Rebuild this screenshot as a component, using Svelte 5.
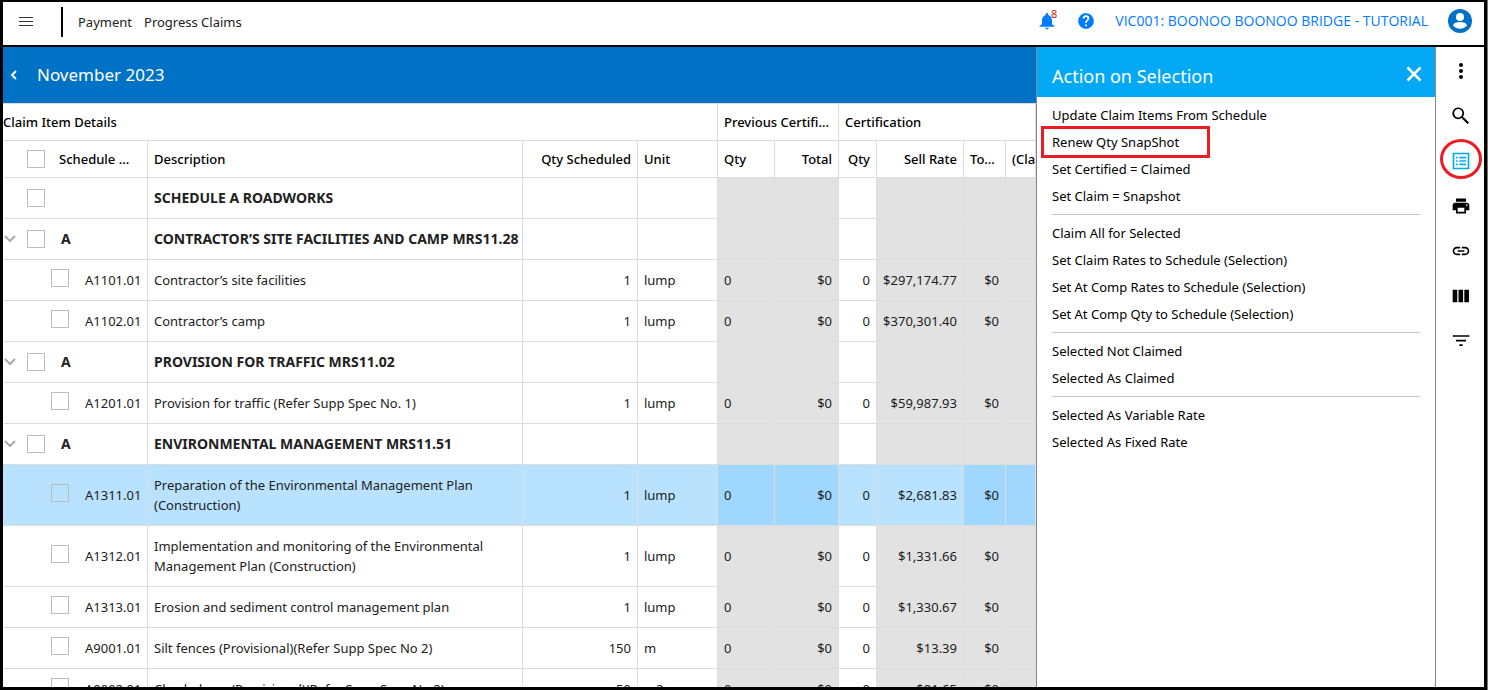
<script>
  let selectAll = $state(false);

  let rows = $state([
    { description: 'SCHEDULE A ROADWORKS', group: true },
    { code: 'A', description: 'CONTRACTOR’S SITE FACILITIES AND CAMP MRS11.28', group: true, open: true },
    { code: 'A1101.01', description: 'Contractor’s site facilities', scheduled: '1', unit: 'lump', rate: '$297,174.77' },
    { code: 'A1102.01', description: 'Contractor’s camp', scheduled: '1', unit: 'lump', rate: '$370,301.40' },
    { code: 'A', description: 'PROVISION FOR TRAFFIC MRS11.02', group: true, open: true },
    { code: 'A1201.01', description: 'Provision for traffic (Refer Supp Spec No. 1)', scheduled: '1', unit: 'lump', rate: '$59,987.93' },
    { code: 'A', description: 'ENVIRONMENTAL MANAGEMENT MRS11.51', group: true, open: true },
    { code: 'A1311.01', description: 'Preparation of the Environmental Management Plan (Construction)', scheduled: '1', unit: 'lump', rate: '$2,681.83', active: true },
    { code: 'A1312.01', description: 'Implementation and monitoring of the Environmental Management Plan (Construction)', scheduled: '1', unit: 'lump', rate: '$1,331.66' },
    { code: 'A1313.01', description: 'Erosion and sediment control management plan', scheduled: '1', unit: 'lump', rate: '$1,330.67' },
    { code: 'A9001.01', description: 'Silt fences (Provisional)(Refer Supp Spec No 2)', scheduled: '150', unit: 'm', rate: '$13.39' },
    { code: 'A9002.01', description: 'Check dams (Provisional)(Refer Supp Spec No 2)', scheduled: '50', unit: 'm2', rate: '$81.65' }
  ]);

  const actions = [
    ['Update Claim Items From Schedule', 'Renew Qty SnapShot', 'Set Certified = Claimed', 'Set Claim = Snapshot'],
    [
      'Claim All for Selected',
      'Set Claim Rates to Schedule (Selection)',
      'Set At Comp Rates to Schedule (Selection)',
      'Set At Comp Qty to Schedule (Selection)'
    ],
    ['Selected Not Claimed', 'Selected As Claimed'],
    ['Selected As Variable Rate', 'Selected As Fixed Rate']
  ];

  const tools = [
    { label: 'More', path: 'M12 7.200a2.400 2.400 0 1 0 0-4.800 2.400 2.400 0 0 0 0 4.800zm0 2.400a2.400 2.400 0 1 0 0 4.800 2.400 2.400 0 0 0 0-4.800zm0 7.200a2.400 2.400 0 1 0 0 4.800 2.400 2.400 0 0 0 0-4.800z' },
    { label: 'Search', path: 'M15.300 13.500h-.9l-.3-.3a7 7 0 1 0-1 1l.3.3v.9l6.400 6.300 1.800-1.800zM8.700 13.700a5 5 0 1 1 0-10 5 5 0 0 1 0 10z' },
    { label: 'Actions', active: true, path: 'M2 2h20v20H2zM4 4v16h16V4zM6 7h2v2H6zM10 7h8v2h-8zM6 11h2v2H6zM10 11h8v2h-8zM6 15h2v2H6zM10 15h8v2h-8z' },
    { label: 'Print', path: 'M19 8H5c-1.660 0-3 1.340-3 3v6h4v4h12v-4h4v-6c0-1.660-1.340-3-3-3zm-3 11H8v-5h8v5zm3-7c-.55 0-1-.45-1-1s.45-1 1-1 1 .45 1 1-.45 1-1 1zm-1-9H6v4h12V3z' },
    { label: 'Link', path: 'M3.900 12c0-1.710 1.390-3.100 3.100-3.100h4V7H7c-2.760 0-5 2.240-5 5s2.240 5 5 5h4v-1.900H7c-1.710 0-3.100-1.390-3.100-3.100zM8 13h8v-2H8v2zm9-6h-4v1.900h4c1.710 0 3.100 1.390 3.100 3.100s-1.390 3.100-3.100 3.100h-4V17h4c2.760 0 5-2.240 5-5s-2.240-5-5-5z' },
    { label: 'Columns', path: 'M2 4.500h5.500v15H2zM9 4.500h5.500v15H9zM16 4.500h5.500v15H16z' },
    { label: 'Filter', path: 'M10 18h4v-2h-4v2zM2 5v2h20V5H2zm4 7.500h12v-2H6v2z' }
  ];

  function toggleAll() {
    for (const row of rows) row.checked = selectAll;
  }
</script>

<div class="app">
  <header class="topbar">
    <button class="menu" aria-label="Menu">
      <svg width="14" height="12" viewBox="0 0 14 12" stroke="#333" stroke-width="1">
        <path d="M0 1.500h14M0 5.500h14M0 9.500h14" />
      </svg>
    </button>
    <nav class="crumbs">
      <a href="#payment">Payment</a>
      <a href="#claims">Progress Claims</a>
    </nav>
    <div class="account">
      <button class="bell" aria-label="Notifications">
        <svg width="20" height="20" viewBox="0 0 24 24" fill="#007bff">
          <path d="M12 22c1.100 0 2-.9 2-2h-4c0 1.100.9 2 2 2zm6-6v-5c0-3.070-1.640-5.640-4.500-6.320V4a1.500 1.500 0 0 0-3 0v.68C7.630 5.360 6 7.920 6 11v5l-3 2v1h18v-1l-3-2z" />
        </svg>
        <span class="count">8</span>
      </button>
      <button aria-label="Help">
        <svg width="18" height="18" viewBox="0 0 24 24" fill="#007bff">
          <path d="M12 1.500a10.500 10.500 0 1 0 0 21 10.500 10.500 0 0 0 0-21zm1.200 17.500h-2.400v-2.400h2.400zm2.300-8.200-1 1c-.9.9-1.300 1.500-1.300 3h-2.400v-.5c0-1.200.5-2.200 1.300-3l1.300-1.300c.4-.4.6-.9.6-1.400a2 2 0 0 0-4 0H7.600a4.400 4.400 0 0 1 8.800 0c0 .9-.4 1.700-.9 2.200z" />
        </svg>
      </button>
      <a class="project" href="#project">VIC001: BOONOO BOONOO BRIDGE - TUTORIAL</a>
      <button aria-label="Account">
        <svg width="24" height="24" viewBox="0 0 24 24">
          <circle cx="12" cy="12" r="12" fill="#0072c6" />
          <circle cx="12" cy="8" r="4" fill="#fff" />
          <path d="M5 16.500c0-2.400 4.600-3.500 7-3.500s7 1.100 7 3.500c-1.500 2-4 3.200-7 3.200s-5.500-1.200-7-3.200z" fill="#fff" />
        </svg>
      </button>
    </div>
  </header>

  <div class="body">
    <main>
      <div class="banner">
        <button aria-label="Back">
          <svg width="7" height="10" viewBox="0 0 7 10" fill="none" stroke="#fff" stroke-width="2">
            <path d="M6 1 2 5l4 4" />
          </svg>
        </button>
        <h1>November 2023</h1>
      </div>

      <table>
        <colgroup>
          <col class="c-code" />
          <col />
          <col class="c-scheduled" />
          <col class="c-unit" />
          <col class="c-prev-qty" />
          <col class="c-prev-total" />
          <col class="c-qty" />
          <col class="c-rate" />
          <col class="c-total" />
          <col class="c-claimed" />
        </colgroup>
        <thead>
          <tr>
            <th class="title" colspan="4">Claim Item Details</th>
            <th colspan="2">Previous Certification</th>
            <th colspan="4">Certification</th>
          </tr>
          <tr>
            <th>
              <div class="code head">
                <span class="toggle"></span>
                <input type="checkbox" aria-label="Select all" bind:checked={selectAll} onchange={toggleAll} />
                <span class="ellipsis">Schedule Code</span>
              </div>
            </th>
            <th>Description</th>
            <th class="num">Qty Scheduled</th>
            <th>Unit</th>
            <th>Qty</th>
            <th class="num">Total</th>
            <th class="num">Qty</th>
            <th class="num">Sell Rate</th>
            <th>Total</th>
            <th class="clip">(Claimed)</th>
          </tr>
        </thead>
        <tbody>
          {#each rows as row}
            <tr class:group={row.group} class:active={row.active}>
              <td>
                <div class="code" class:leaf={!row.group}>
                  <span class="toggle">
                    {#if row.open}
                      <svg width="12" height="8" viewBox="0 0 12 8" fill="none" stroke="#aaa" stroke-width="2">
                        <path d="M1 1l5 5 5-5" />
                      </svg>
                    {/if}
                  </span>
                  <input type="checkbox" aria-label="Select {row.description}" bind:checked={row.checked} />
                  <span>{row.code ?? ''}</span>
                </div>
              </td>
              <td class="desc">{row.description}</td>
              <td class="num">{row.scheduled ?? ''}</td>
              <td>{row.unit ?? ''}</td>
              <td class="locked">{row.group ? '' : '0'}</td>
              <td class="locked num">{row.group ? '' : '$0'}</td>
              <td class="num">{row.group ? '' : '0'}</td>
              <td class="locked rate num">{row.rate ?? ''}</td>
              <td class="locked num">{row.group ? '' : '$0'}</td>
              <td class="locked"></td>
            </tr>
          {/each}
        </tbody>
      </table>
    </main>

    <aside class="panel">
      <div class="panel-head">
        <h2>Action on Selection</h2>
        <button aria-label="Close">
          <svg width="16" height="16" viewBox="0 0 16 16" stroke="#fff" stroke-width="2.500">
            <path d="M1.500 1.500l13 13M14.500 1.500l-13 13" />
          </svg>
        </button>
      </div>
      <div class="actions">
        {#each actions as group}
          <ul>
            {#each group as action}
              <li>
                <button class:marked={action === 'Renew Qty SnapShot'}>{action}</button>
              </li>
            {/each}
          </ul>
        {/each}
      </div>
    </aside>

    <div class="tools">
      {#each tools as tool}
        <button class:current={tool.active} aria-label={tool.label}>
          <svg width="20" height="20" viewBox="0 0 24 24" fill="currentColor" fill-rule="evenodd">
            <path d={tool.path} />
          </svg>
        </button>
      {/each}
    </div>
  </div>
</div>

<style>
  :global(*) { box-sizing: border-box; margin: 0; padding: 0; }
  :global(body) { padding-right: 1px; background: #777; }
  button { display: flex; align-items: center; border: none; background: none; font: inherit; color: inherit; cursor: pointer; }
  a { color: inherit; text-decoration: none; }
  ul { list-style: none; }

  .app {
    display: flex;
    flex-direction: column;
    height: 100vh;
    overflow: hidden;
    border: 3px solid #000;
    border-top-width: 2px;
    background: #fff;
    font-family: "Segoe UI", "Noto Sans", "Open Sans", sans-serif;
    font-size: 13px;
    line-height: 20px;
    color: #212121;
  }

  .topbar { display: flex; align-items: center; flex: none; height: 45px; padding: 0 12px 4px 16px; border-bottom: 2px solid #000; }
  .crumbs { display: flex; align-items: center; gap: 12px; height: 30px; margin-left: 28px; padding-left: 15px; border-left: 2px solid #000; }
  .account { display: flex; align-items: center; gap: 20px; margin-left: auto; padding-bottom: 2px; }
  .bell { position: relative; }
  .count { position: absolute; top: -4px; right: 0; font-size: 11px; line-height: 14px; color: #e02010; }
  .project { font-family: "Segoe UI", "Open Sans", sans-serif; font-size: 14px; color: #007bff; }

  .body { display: flex; flex: 1; min-height: 0; }
  main { flex: 1; min-width: 0; overflow: hidden; }

  .banner { display: flex; align-items: center; gap: 20px; height: 57px; padding-left: 7px; border-bottom: 1px solid #ddd; background: #0072c6; color: #fff; }
  h1, h2 { font-weight: 400; }
  h1 { font-size: 17px; }
  h2 { font-size: 18px; }

  table { width: 100%; table-layout: fixed; border-collapse: separate; border-spacing: 0; }
  .c-code { width: 145px; }
  .c-scheduled { width: 115px; }
  .c-unit { width: 80px; }
  .c-prev-qty { width: 57px; }
  .c-prev-total { width: 64px; }
  .c-qty { width: 38px; }
  .c-rate { width: 87px; }
  .c-total { width: 42px; }
  .c-claimed { width: 30px; }

  th, td { padding: 0 6px; border-right: 1px solid #ddd; border-bottom: 1px solid #ddd; text-align: left; }
  th { height: 37px; overflow: hidden; font-weight: 500; color: #000; white-space: nowrap; text-overflow: ellipsis; }
  td { height: 41px; }
  th.title { padding-left: 0; }
  th.clip { text-overflow: clip; }
  .num { text-align: right; }
  .desc { padding: 10px 0 10px 6px; }
  th:first-child, td:first-child { padding-left: 0; padding-right: 0; }
  .group { font-size: 14px; font-weight: 700; }
  .locked { background: #e2e2e2; }
  .active td { background: #b9e2ff; }
  .active .locked:not(.rate) { background: #a0d7ff; }

  .code { display: flex; align-items: center; }
  .code.head { padding-right: 14px; }
  .code.leaf { padding-left: 24px; }
  .toggle { display: flex; flex: none; width: 24px; padding-left: 1px; }
  .code input { flex: none; appearance: none; width: 18px; height: 18px; margin-right: 16px; border: 1px solid #bbb; }
  .code input:checked { background: #03a9f4; }
  .code.head input { margin-right: 14px; }
  .leaf input { margin-bottom: 4px; }
  .ellipsis { overflow: hidden; text-overflow: ellipsis; }

  .panel { flex: none; width: 400px; border: 1px solid #888; border-width: 0 1px; }
  .panel-head { display: flex; align-items: center; justify-content: space-between; height: 50px; padding: 8px 13px 0 15px; background: #03a9f4; color: #fff; }
  .panel-head button { padding-bottom: 4px; }
  .actions { padding: 4px 15px; color: #000; }
  .actions ul + ul { margin-top: 5px; padding-top: 4px; border-top: 1px solid #c6c6c6; }
  .actions button { position: relative; height: 27px; text-align: left; }
  .marked::after { content: ''; position: absolute; inset: -2px -31px -3px -11px; border: 3px solid #ed1c24; }

  .tools { display: flex; flex: none; flex-direction: column; align-items: center; gap: 25px; width: 48px; padding: 14px 0 0 1px; color: #000; }
  .tools button { position: relative; }
  .tools .current { color: #03a9f4; }
  .current::after { content: ''; position: absolute; inset: -12px -11px -8px; border: 3px solid #ed1c24; border-radius: 50%; }
</style>
